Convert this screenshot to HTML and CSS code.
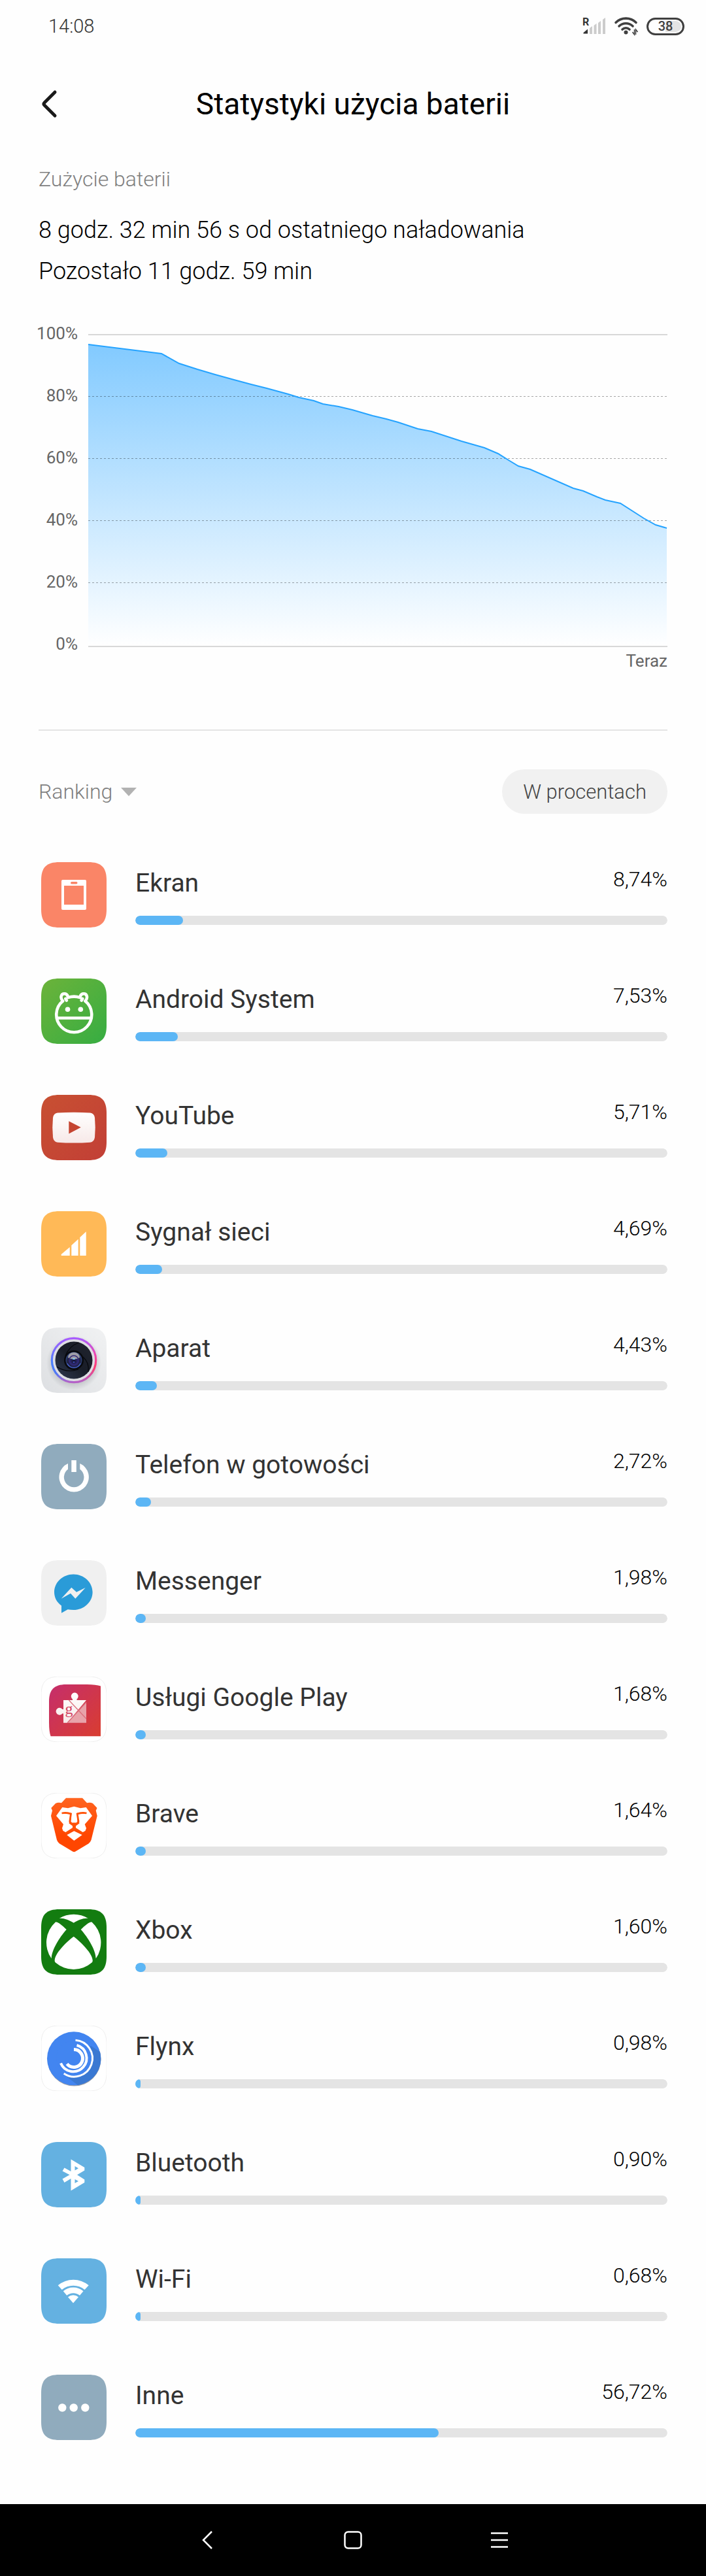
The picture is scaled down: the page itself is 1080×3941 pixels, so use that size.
FILE: index.html
```html
<!DOCTYPE html>
<html lang="pl">
<head>
    <meta charset="UTF-8">
    <meta name="viewport" content="width=device-width, initial-scale=1.0">
    <title>Statystyki użycia baterii</title>
    <link rel="stylesheet" href="styles.css">
</head>
<body>
    <!-- shared shapes -->
    <svg class="defs" width="0" height="0" aria-hidden="true">
        <defs>
            <path id="tile" d="M28 0H72C92 0 100 8 100 28V72C100 92 92 100 72 100H28C8 100 0 92 0 72V28C0 8 8 0 28 0Z"/>
            <linearGradient id="g-chart" x1="0" y1="0" x2="0" y2="1">
                <stop offset="0" stop-color="#82caff"/>
                <stop offset="1" stop-color="#ffffff"/>
            </linearGradient>
            <linearGradient id="g-android" x1="0" y1="0" x2="1" y2="1">
                <stop offset="0" stop-color="#6cb33a"/>
                <stop offset="1" stop-color="#36ad42"/>
            </linearGradient>
            <linearGradient id="g-youtube" x1="0" y1="0" x2="1" y2="1">
                <stop offset="0" stop-color="#c85032"/>
                <stop offset="1" stop-color="#c23f36"/>
            </linearGradient>
            <linearGradient id="g-play" x1="0" y1="0" x2="0" y2="1">
                <stop offset="0" stop-color="#ffffff"/>
                <stop offset="1" stop-color="#f7e9e8"/>
            </linearGradient>
            <linearGradient id="g-silver" x1="0" y1="1" x2="1" y2="0">
                <stop offset="0" stop-color="#dddfe2"/>
                <stop offset="1" stop-color="#f1f2f3"/>
            </linearGradient>
            <linearGradient id="g-ring-l" x1="0" y1="0" x2="0" y2="1">
                <stop offset="0" stop-color="#a85cff"/>
                <stop offset="0.55" stop-color="#4a80ff"/>
                <stop offset="0.8" stop-color="#5078f5"/>
                <stop offset="1" stop-color="#b562c8"/>
            </linearGradient>
            <linearGradient id="g-ring-r" x1="0" y1="0" x2="0" y2="1">
                <stop offset="0" stop-color="#a85cff"/>
                <stop offset="0.35" stop-color="#ea48b4"/>
                <stop offset="0.65" stop-color="#ff3d72"/>
                <stop offset="1" stop-color="#b562c8"/>
            </linearGradient>
            <radialGradient id="g-shadow">
                <stop offset="0.7" stop-color="#8b8e94" stop-opacity="0.4"/>
                <stop offset="1" stop-color="#8b8e94" stop-opacity="0"/>
            </radialGradient>
            <radialGradient id="g-lens" cx="0.5" cy="0.55">
                <stop offset="0" stop-color="#14142e"/>
                <stop offset="0.5" stop-color="#2c2a70"/>
                <stop offset="0.75" stop-color="#1c1e3c"/>
                <stop offset="1" stop-color="#31467c"/>
            </radialGradient>
            <linearGradient id="g-blades" x1="0" y1="1" x2="1" y2="0">
                <stop offset="0" stop-color="#2f3a52"/>
                <stop offset="0.5" stop-color="#191d28"/>
                <stop offset="1" stop-color="#20242e"/>
            </linearGradient>
            <linearGradient id="g-services" x1="0" y1="0" x2="1" y2="1">
                <stop offset="0" stop-color="#c52e6c"/>
                <stop offset="1" stop-color="#d93d30"/>
            </linearGradient>
            <linearGradient id="g-brave" x1="0" y1="0" x2="0" y2="1">
                <stop offset="0" stop-color="#ff6420"/>
                <stop offset="0.7" stop-color="#ff4600"/>
            </linearGradient>
        </defs>
    </svg>

    <div class="status-bar">
        <span class="clock">14:08</span>
        <div class="status-icons">
            <svg width="36" height="36" viewBox="0 -4 36 36">
                <text class="roaming" x="0" y="13">R</text>
                <path fill="#333" d="M1.500 25.500V24L8 18.500V25.500Z"/>
                <path fill="#ccc" d="M11 26V17L15 14V26ZM17.500 26V13L21.500 10V26ZM24 26V9L28 6V26ZM31 26V4L35 1V26Z"/>
            </svg>
            <svg width="38" height="30" viewBox="0 0 38 30">
                <g fill="none" stroke="#404040" stroke-width="3.600" stroke-linecap="round">
                    <path d="M3 9.500A22 22 0 0 1 34 9.500"/>
                    <path d="M8 15A15 15 0 0 1 29 15"/>
                    <path d="M13 20A8 8 0 0 1 24 20"/>
                </g>
                <circle cx="18.500" cy="24.500" r="3" fill="#404040"/>
                <path d="M31.500 20V28L28.500 24M33.500 28V20L36.500 24" fill="none" stroke="#404040" stroke-width="1.500"/>
            </svg>
            <span class="battery"><span class="battery-level">38</span></span>
        </div>
    </div>

    <header class="header">
        <button class="back" aria-label="Wstecz">
            <svg width="28" height="44" viewBox="0 0 28 44">
                <path d="M24 4L8 20Q6 22 8 24L24 40" fill="none" stroke="#1a1a1a" stroke-width="5" stroke-linecap="round"/>
            </svg>
        </button>
        <h1>Statystyki użycia baterii</h1>
    </header>

    <main>
        <section class="summary">
            <h2>Zużycie baterii</h2>
            <p>8 godz. 32 min 56 s od ostatniego naładowania</p>
            <p>Pozostało 11 godz. 59 min</p>
        </section>

        <section class="chart">
            <div class="axis">
                <span>100%</span>
                <span>80%</span>
                <span>60%</span>
                <span>40%</span>
                <span>20%</span>
                <span>0%</span>
            </div>
            <div class="plot">
                <svg class="plot-area" viewBox="0 0 886 479" preserveAspectRatio="none">
                    <path fill="url(#g-chart)" d="M0 16L112 30L139 45L167 54L194 62L223 70L249 77L273 83L306 92L322 97L345 102L359 107L383 111L404 116L435 125L456 130L474 135L504 145L525 149L571 164L606 174L627 183L643 193L658 202L676 207L742 236L757 240L778 249L791 254L814 259L850 282L868 292L885 297V478H0Z"/>
                    <path class="grid-line" d="M0 95.500H886M0 190.500H886M0 285.500H886M0 380.500H886"/>
                    <path class="level-line" d="M0 16L112 30L139 45L167 54L194 62L223 70L249 77L273 83L306 92L322 97L345 102L359 107L383 111L404 116L435 125L456 130L474 135L504 145L525 149L571 164L606 174L627 183L643 193L658 202L676 207L742 236L757 240L778 249L791 254L814 259L850 282L868 292L885 297"/>
                    <path class="edge-line" d="M0 1H886M0 478H886"/>
                </svg>
                <span class="now">Teraz</span>
            </div>
        </section>

        <div class="toolbar">
            <div class="sort">
                <select aria-label="Sortowanie">
                    <option>Ranking</option>
                </select>
                <svg width="24" height="13" viewBox="0 0 24 13"><path d="M0 0H24L12 13Z" fill="#b2b2b2"/></svg>
            </div>
            <button class="unit">W procentach</button>
        </div>

        <ul class="apps">
            <li class="app">
                <svg class="icon" viewBox="0 0 100 100">
                    <use href="#tile" fill="#fa8567"/>
                    <rect x="31" y="27" width="38" height="46" rx="2" fill="#fff"/>
                    <rect x="35" y="36" width="30" height="29" fill="#fa8567"/>
                    <rect x="45" y="30" width="10.500" height="3.500" rx="1.700" fill="#fa8567"/>
                </svg>
                <div class="info">
                    <div class="line"><label class="name" for="app-ekran">Ekran</label><span class="percent">8,74%</span></div>
                    <progress id="app-ekran" max="100" value="9"></progress>
                </div>
            </li>
            <li class="app">
                <svg class="icon" viewBox="0 0 100 100">
                    <use href="#tile" fill="url(#g-android)"/>
                    <g fill="none" stroke="#fff" stroke-width="4.600" stroke-linecap="round">
                        <path d="M33 34.500A27 27 0 1 0 67.500 34.500M41 29.200A28 28 0 0 1 59.500 29.200"/>
                        <path d="M33 34.500C28.500 29.500 30.500 23.300 35.500 23.300C40 23.300 40.500 26.500 41.300 28.500M37.300 31L38.800 33.500"/>
                        <path d="M67.500 34.500C72 29.500 70 23.300 65 23.300C60.500 23.300 60 26.500 59.200 28.500M63.200 31L61.700 33.500"/>
                        <path d="M24.500 60.500H76" stroke-linecap="butt"/>
                    </g>
                    <circle cx="40.500" cy="47.300" r="3.800" fill="#fff"/>
                    <circle cx="60.300" cy="47.300" r="3.800" fill="#fff"/>
                </svg>
                <div class="info">
                    <div class="line"><label class="name" for="app-android">Android System</label><span class="percent">7,53%</span></div>
                    <progress id="app-android" max="100" value="8"></progress>
                </div>
            </li>
            <li class="app">
                <svg class="icon" viewBox="0 0 100 100">
                    <use href="#tile" fill="url(#g-youtube)"/>
                    <path fill="url(#g-play)" d="M25 27.500Q50 26 75 27.500Q81 28 82 35Q83.500 50 82 65Q81 72 75 72.700Q50 74.500 25 72.700Q19 72 18 65Q16.500 50 18 35Q19 28 25 27.500Z"/>
                    <path fill="#c54531" d="M42.300 40.300L60.700 49.800L42.300 59.500Z"/>
                </svg>
                <div class="info">
                    <div class="line"><label class="name" for="app-youtube">YouTube</label><span class="percent">5,71%</span></div>
                    <progress id="app-youtube" max="100" value="6"></progress>
                </div>
            </li>
            <li class="app">
                <svg class="icon" viewBox="0 0 100 100">
                    <use href="#tile" fill="#ffb957"/>
                    <path fill="#fff" d="M30.700 68V66L43.700 55V68ZM46.300 68V52.300L56.700 42.700V68ZM59.300 68V40L68.700 31.300V68Z"/>
                </svg>
                <div class="info">
                    <div class="line"><label class="name" for="app-sygnal">Sygnał sieci</label><span class="percent">4,69%</span></div>
                    <progress id="app-sygnal" max="100" value="5"></progress>
                </div>
            </li>
            <li class="app">
                <svg class="icon" viewBox="0 0 100 100">
                    <use href="#tile" fill="url(#g-silver)"/>
                    <circle cx="50" cy="54" r="42" fill="url(#g-shadow)"/>
                    <circle cx="50" cy="50" r="34" fill="#dedee3"/>
                    <path d="M50 16.300A33.700 33.700 0 0 0 50 83.700" fill="none" stroke="url(#g-ring-l)" stroke-width="3.200"/>
                    <path d="M50 16.300A33.700 33.700 0 0 1 50 83.700" fill="none" stroke="url(#g-ring-r)" stroke-width="3.200"/>
                    <circle cx="50" cy="50" r="28.500" fill="url(#g-blades)"/>
                    <path d="M37 43C41 33 49 26 58 23M24 60C33 66 45 68 57 64M64 45C72 52 73 61 72 68" fill="none" stroke="#07080c" stroke-width="1.200"/>
                    <circle cx="50" cy="50" r="15" fill="#08090d"/>
                    <circle cx="50" cy="50" r="12.500" fill="url(#g-lens)"/>
                    <path d="M41 46A9 8 0 0 1 59 46Q50 51 41 46Z" fill="#b4b2b4" opacity="0.850"/>
                    <path d="M40 55A11 11 0 0 0 60 55" fill="none" stroke="#4a68d8" stroke-width="1.300"/>
                    <circle cx="50" cy="50" r="7" fill="none" stroke="#332a78" stroke-width="1.500"/>
                    <ellipse cx="50" cy="48" rx="2.200" ry="1" fill="#7ed2ff"/>
                    <circle cx="50" cy="53" r="1.300" fill="#3a4cb4"/>
                </svg>
                <div class="info">
                    <div class="line"><label class="name" for="app-aparat">Aparat</label><span class="percent">4,43%</span></div>
                    <progress id="app-aparat" max="100" value="4"></progress>
                </div>
            </li>
            <li class="app">
                <svg class="icon" viewBox="0 0 100 100">
                    <use href="#tile" fill="#90abbd"/>
                    <path d="M41 30V38.700A15.300 15.300 0 1 0 59.300 38.700V30A22.700 22.700 0 1 1 41 30Z" fill="#fff"/>
                    <rect x="46.300" y="25" width="7.500" height="18" fill="#fff"/>
                </svg>
                <div class="info">
                    <div class="line"><label class="name" for="app-telefon">Telefon w gotowości</label><span class="percent">2,72%</span></div>
                    <progress id="app-telefon" max="100" value="3"></progress>
                </div>
            </li>
            <li class="app">
                <svg class="icon" viewBox="0 0 100 100">
                    <use href="#tile" fill="#f0f0f0"/>
                    <path fill="#2a9bd8" d="M49.300 21.400C65.500 21.400 78.600 33.600 78.600 48.700S65.500 76 49.300 76Q45 76 40.700 75.300L31 80.700V69.500C24 64.500 20 57 20 48.700C20 33.600 33.100 21.400 49.300 21.400Z"/>
                    <path fill="#f0f0f0" d="M30.700 58.700L46.300 41.700L54 48.700L67.700 42L52.300 58.700L45 50.700Z"/>
                </svg>
                <div class="info">
                    <div class="line"><label class="name" for="app-messenger">Messenger</label><span class="percent">1,98%</span></div>
                    <progress id="app-messenger" max="100" value="2"></progress>
                </div>
            </li>
            <li class="app">
                <svg class="icon" viewBox="0 0 100 100">
                    <use href="#tile" class="outline"/>
                    <path fill="url(#g-services)" d="M14.500 91.300Q12 84 12 70V38C12 20 20 12 38 12H70Q84 12 91 14.500V91.300Z"/>
                    <path fill="url(#g-play)" d="M34 36H48V34.500A5.500 5.500 0 1 1 54.500 34.500V36H69L40 70.700H34V56.500H32.500A5.500 5.500 0 1 1 32.500 50H34Z"/>
                    <path fill="#e8a3aa" d="M69 39.500V70.700H40.500Z"/>
                    <path fill="none" stroke="#dc6f7c" stroke-width="1.300" d="M42.300 36L69 64.500M69 39.300L40 70.700"/>
                    <text class="glyph" x="36.500" y="57">g</text>
                </svg>
                <div class="info">
                    <div class="line"><label class="name" for="app-uslugi">Usługi Google Play</label><span class="percent">1,68%</span></div>
                    <progress id="app-uslugi" max="100" value="2"></progress>
                </div>
            </li>
            <li class="app">
                <svg class="icon" viewBox="0 0 100 100">
                    <use href="#tile" class="outline"/>
                    <path fill="url(#g-brave)" d="M38 7.700H63L70 15.300Q75 14 79 16L85.500 23L83.700 27L85.700 35L76.500 72Q75.500 75 72.500 77.500L52.500 89.500Q50.300 91 48 89.500L28 77.500Q25 75 24 72L15 35L17 27L15.300 23L22 16Q26 14 31 15.300Z"/>
                    <path fill="#fff" d="M32.300 22L41 23.300L50.300 20.700L60 23.300L68.700 22L78 35L66.700 48L69 54L67.500 58L63 60.500L53 54.500V50.500L58.500 46.500L55.500 33Q62 31.500 69.500 31.500Q62 28.500 54 31L56 46H45L47 31Q39 28.500 31.500 31.500Q38 31.500 45.500 33L42.500 46.500L48 50.500V54.500L38 60.500L33.500 58L32 54L34 48L23 35Z"/>
                    <path fill="#fff" d="M46.800 31L50.300 29.500L54 31L55.500 33L54.500 41L56 44L53.500 46.500H47.500L45 44L46.500 41L45.500 33Z"/>
                    <path fill="#fff" d="M50.300 58.300L62.700 64.300L50.300 73L39.300 64.300Z"/>
                    <path fill="none" stroke="#ff5208" stroke-width="2.800" d="M31.500 31Q39 29.500 45.500 32L43.800 43.500L46.500 47H54.500L57 43.500L55.200 32Q62 29.500 69.500 31M50.400 47V53M37 62L50.400 53.500L64 62"/>
                </svg>
                <div class="info">
                    <div class="line"><label class="name" for="app-brave">Brave</label><span class="percent">1,64%</span></div>
                    <progress id="app-brave" max="100" value="2"></progress>
                </div>
            </li>
            <li class="app">
                <svg class="icon" viewBox="0 0 100 100">
                    <use href="#tile" fill="#137c10"/>
                    <g fill="#fff">
                        <path d="M27.500 14A42.300 42.300 0 0 1 72 14C65 13 57 16.500 49.700 20.700C42 16.500 34 13 27.500 14Z"/>
                        <path d="M22 19.500A42.300 42.300 0 0 0 15.700 75.300C16 62 28 43 38.700 31C32 24.500 26 19 22 19.500Z"/>
                        <path d="M77.400 19.500A42.300 42.300 0 0 1 83.700 75.300C83.400 62 71.400 43 60.700 31C67.400 24.500 73.400 19 77.400 19.500Z"/>
                        <path d="M49.700 41.700C62 51 78.500 68 78.700 78Q79 80 77.500 81.500A42.300 42.300 0 0 1 21.900 81.500Q20.300 80 20.700 78C21 68 37 51 49.700 41.700Z"/>
                    </g>
                </svg>
                <div class="info">
                    <div class="line"><label class="name" for="app-xbox">Xbox</label><span class="percent">1,60%</span></div>
                    <progress id="app-xbox" max="100" value="2"></progress>
                </div>
            </li>
            <li class="app">
                <svg class="icon" viewBox="0 0 100 100">
                    <use href="#tile" class="outline"/>
                    <circle cx="50.500" cy="51.500" r="41" fill="#9a9da6"/>
                    <circle cx="50" cy="50.300" r="41" fill="#4285f0"/>
                    <path fill="#3a78d2" d="M76 31L90 40A41 41 0 0 1 56 91L35 75Z"/>
                    <circle cx="50" cy="50" r="27" fill="#4285f0"/>
                    <g fill="none" stroke="#fff">
                        <path stroke-width="5" d="M50 36.500A13.500 13.500 0 1 1 39.500 58.500"/>
                        <path stroke-width="4" d="M54.500 30A20.500 20.500 0 1 1 30 57.500"/>
                        <path stroke-width="3" d="M52.500 22.200A28 28 0 1 1 34.700 73.300"/>
                    </g>
                </svg>
                <div class="info">
                    <div class="line"><label class="name" for="app-flynx">Flynx</label><span class="percent">0,98%</span></div>
                    <progress id="app-flynx" max="100" value="1"></progress>
                </div>
            </li>
            <li class="app">
                <svg class="icon" viewBox="0 0 100 100">
                    <use href="#tile" fill="#64b1e1"/>
                    <path fill="#fff" fill-rule="evenodd" d="M45.500 26.500L66.300 39V43.500L55 50.300L66.300 57.500V62L45.500 74.500V56L35.500 62L32.500 56.500L43.500 50.300L32.500 44.500L35.500 39.500L45.500 45ZM51.500 37V43.500L57 40.300ZM51.500 57V63L57 60Z"/>
                </svg>
                <div class="info">
                    <div class="line"><label class="name" for="app-bluetooth">Bluetooth</label><span class="percent">0,90%</span></div>
                    <progress id="app-bluetooth" max="100" value="1"></progress>
                </div>
            </li>
            <li class="app">
                <svg class="icon" viewBox="0 0 100 100">
                    <use href="#tile" fill="#64b1e1"/>
                    <g fill="#fff">
                        <path d="M25.700 41.300A36.500 36.500 0 0 1 72.700 41.300L66.500 48A27.300 27.300 0 0 0 31.700 48Z"/>
                        <path d="M33.700 50.300A23.600 23.600 0 0 1 64.500 50.300L59 56.800A15.500 15.500 0 0 0 39.200 56.800Z"/>
                        <path d="M41 59.300A12.300 12.300 0 0 1 57 59.300L49 68.500Z"/>
                    </g>
                </svg>
                <div class="info">
                    <div class="line"><label class="name" for="app-wifi">Wi-Fi</label><span class="percent">0,68%</span></div>
                    <progress id="app-wifi" max="100" value="1"></progress>
                </div>
            </li>
            <li class="app">
                <svg class="icon" viewBox="0 0 100 100">
                    <use href="#tile" fill="#90abbd"/>
                    <g fill="#fff">
                        <circle cx="32.300" cy="50.500" r="6.200"/>
                        <circle cx="49.700" cy="50.500" r="6.200"/>
                        <circle cx="67.300" cy="50.500" r="6.200"/>
                    </g>
                </svg>
                <div class="info">
                    <div class="line"><label class="name" for="app-inne">Inne</label><span class="percent">56,72%</span></div>
                    <progress id="app-inne" max="100" value="57"></progress>
                </div>
            </li>
        </ul>
    </main>

    <nav class="nav-bar">
        <button aria-label="Wstecz">
            <svg width="28" height="28" viewBox="0 0 28 28"><path d="M22 1L9 14L22 27" fill="none" stroke="#fff" stroke-width="2.500"/></svg>
        </button>
        <button aria-label="Ekran główny">
            <svg width="28" height="28" viewBox="0 0 28 28"><rect x="1.500" y="1.500" width="25" height="25" rx="5" fill="none" stroke="#fff" stroke-width="2.500"/></svg>
        </button>
        <button aria-label="Ostatnie aplikacje">
            <svg width="28" height="28" viewBox="0 0 28 28"><path d="M1 3.500H27M1 14H27M1 24.500H27" fill="none" stroke="#fff" stroke-width="2.500"/></svg>
        </button>
    </nav>
</body>
</html>
```
FILE: styles.css
```css
* {
    margin: 0;
    padding: 0;
    box-sizing: border-box;
}
body {
    font-family: Roboto, "Liberation Sans", sans-serif;
    font-weight: 300;
    background-color: #fefefe;
    color: #000;
}
svg {
    display: block;
    flex-shrink: 0;
}
.defs {
    position: absolute;
}
button, select {
    font: inherit;
    color: inherit;
    background: none;
    border: none;
    cursor: pointer;
}

/* status bar */
.status-bar {
    display: flex;
    justify-content: space-between;
    align-items: center;
    height: 80px;
    padding: 0 33px 0 74px;
}
.clock {
    font-size: 29px;
    line-height: 40px;
    color: #333;
}
.status-icons {
    display: flex;
    align-items: center;
    gap: 12px;
}
.roaming {
    font-size: 16px;
    font-weight: 700;
    fill: #333;
}
.battery {
    width: 58px;
    height: 27px;
    padding: 2px;
    border: 3px solid #404040;
    border-radius: 14px;
}
.battery-level {
    display: block;
    border-radius: 9px;
    background: linear-gradient(to right, #fefefe 50%, #e4e4e4 50%);
    font-size: 20px;
    font-weight: 500;
    line-height: 17px;
    text-align: center;
    color: #404040;
}

/* header */
.header {
    display: grid;
    grid-template-columns: 90px 1fr 90px;
    align-items: center;
    height: 158px;
}
.back {
    padding-left: 60px;
}
h1 {
    font-size: 46px;
    font-weight: 400;
    line-height: 60px;
    text-align: center;
}

main {
    padding: 16px 59px 59px;
}
.summary h2 {
    margin-bottom: 27px;
    font-size: 32px;
    font-weight: 300;
    line-height: 40px;
    color: #808080;
}
.summary p {
    font-size: 36px;
    line-height: 63px;
}

/* chart */
.chart {
    display: grid;
    grid-template-columns: 60px 1fr;
    gap: 16px;
    margin-top: 47px;
    font-size: 26px;
    font-weight: 400;
    line-height: 32px;
    color: #666;
}
.axis {
    display: flex;
    flex-direction: column;
    justify-content: space-between;
    align-items: flex-end;
    height: 507px;
}
.plot {
    padding-top: 17px;
}
.plot-area {
    width: 100%;
    height: 479px;
}
.plot-area path {
    vector-effect: non-scaling-stroke;
}
.grid-line {
    fill: none;
    stroke: rgba(0, 0, 0, 0.35);
    stroke-width: 1px;
    stroke-dasharray: 3 3;
}
.level-line {
    fill: none;
    stroke: #25a3ff;
    stroke-width: 2px;
}
.edge-line {
    fill: none;
    stroke: #d8d8d8;
    stroke-width: 2px;
}
.now {
    display: block;
    margin-top: 5px;
    text-align: right;
}

/* sorting and units */
.toolbar {
    display: flex;
    justify-content: space-between;
    align-items: center;
    margin-top: 89px;
    padding-top: 59px;
    border-top: 2px solid #e4e4e4;
}
.sort {
    display: flex;
    align-items: center;
    gap: 12px;
    font-size: 32px;
    color: #808080;
}
.sort select {
    appearance: none;
}
.unit {
    height: 68px;
    padding: 0 32px;
    border-radius: 34px;
    background-color: #f1f1f1;
    font-size: 31px;
    color: #444;
}

/* app list */
.apps {
    margin-top: 35px;
    list-style: none;
}
.app {
    display: flex;
    align-items: center;
    gap: 44px;
    height: 178px;
    padding-left: 4px;
}
.icon {
    width: 100px;
    height: 100px;
}
.outline {
    fill: #fff;
    stroke: #eee;
    stroke-width: 1px;
}
.glyph {
    font-family: "Liberation Serif", serif;
    font-size: 24px;
    fill: #d2415f;
}
.info {
    flex: 1;
}
.line {
    display: flex;
    justify-content: space-between;
    align-items: flex-start;
}
.name {
    font-size: 39px;
    font-weight: 400;
    line-height: 54px;
    color: #333;
}
.percent {
    font-size: 32px;
    line-height: 42px;
}
progress {
    display: block;
    appearance: none;
    width: 100%;
    height: 14px;
    margin-top: 23px;
    border: none;
    border-radius: 7px;
    overflow: hidden;
}
progress::-webkit-progress-bar {
    background-color: #e4e4e4;
    border-radius: 7px;
}
progress::-webkit-progress-value {
    background-color: #5cb6f5;
    border-radius: 7px;
}

/* system buttons */
.nav-bar {
    display: flex;
    justify-content: center;
    align-items: center;
    gap: 124px;
    height: 110px;
    background-color: #000;
}
.nav-bar button {
    display: flex;
    justify-content: center;
    width: 100px;
}
```
